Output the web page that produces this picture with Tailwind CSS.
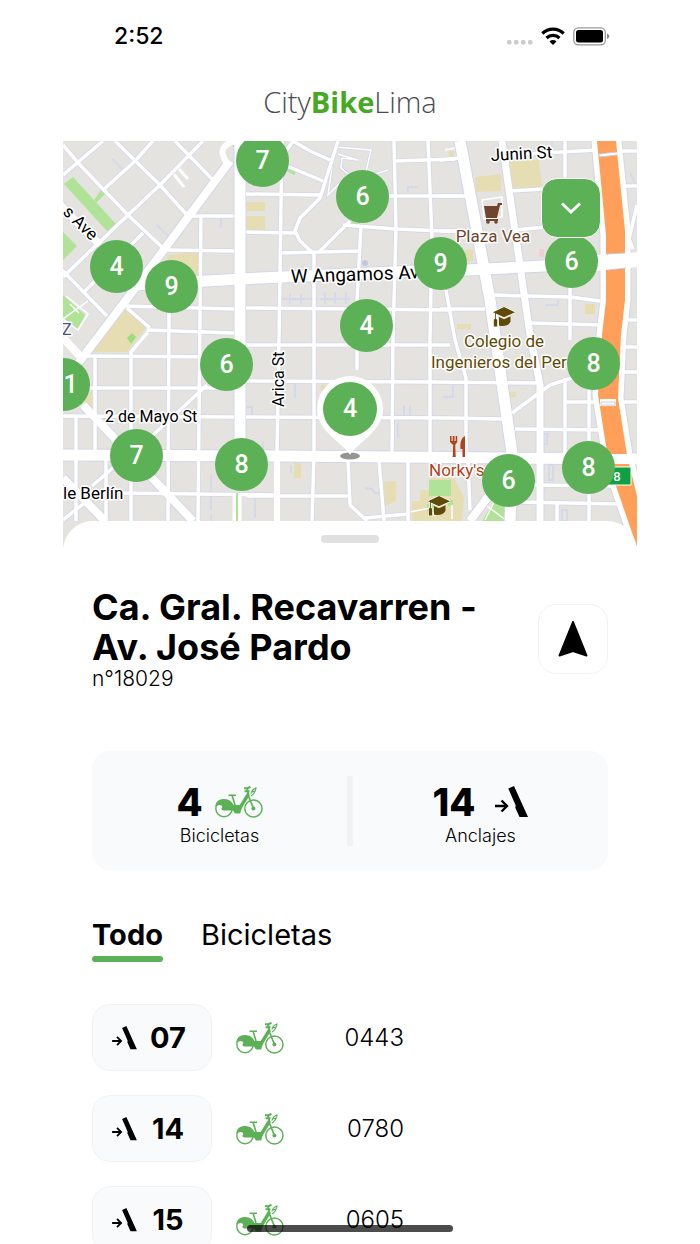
<!DOCTYPE html>
<html lang="es">
<head>
    <meta charset="UTF-8">
    <meta name="viewport" content="width=device-width, initial-scale=1.0">
    <title>CityBikeLima</title>

    <!-- Tailwind CSS CDN -->
    <script src="https://cdn.jsdelivr.net/npm/@tailwindcss/browser@4"></script>
</head>
<body class="bg-white text-black font-['Inter',sans-serif]">

    <!-- Shared icons -->
    <svg class="hidden" aria-hidden="true">
        <symbol id="bike" viewBox="0 0 48 32">
            <g fill="none" stroke="#5cb157">
                <circle cx="9" cy="22.5" r="8.2" stroke-width="1.4" />
                <circle cx="38.4" cy="22.5" r="8.6" stroke-width="1.5" />
                <path d="M13.500 9.200h7.500M17 9l3 10" stroke-width="1.600" />
                <path d="M22.500 26L33.500 8" stroke-width="3.400" />
                <path d="M33 9l5.500 13.500" stroke-width="1.700" />
                <path d="M33.500 9L32 2M29 2.200h3.500L35.500.8M29.500 5.200h5" stroke-width="2" />
                <path d="M36 7.500c.5-3 2-4.500 5-5.500-.3 3-1.500 5.500-5 8M37 6l3-1" stroke-width="1.200" />
            </g>
            <g fill="#5cb157">
                <path d="M.3 21C.6 15.500 4 12.800 9 13c5 .3 8 2.500 9.500 6h7l1.500 2-1.800 6.500h-5.200l-2-3H8.500c-2 0-2.800-2-1.200-3.200-.3-3-3.800-3.300-7-.3z" />
                <circle cx="38.400" cy="22.500" r="2" />
            </g>
        </symbol>
        <symbol id="dock" viewBox="0 0 33 32">
            <path d="M0 20h11M6.500 14.500L12 20l-5.500 5.500" fill="none" stroke="#000" stroke-width="2.400" />
            <path d="M13.300 2.500L19 0l14 31h-8.500l-4.200-9.300.4-2.200z" />
        </symbol>
        <symbol id="school" viewBox="0 0 22 20">
            <path d="M11 0l11 5.200-11 5L2.800 6.600v5.200l1.400 1v6.700H.8v-6.700l1.100-1V6L0 5.200z" stroke="#fff" stroke-width="1.500" paint-order="stroke" />
            <path d="M6 10l5 2.200 6.500-2.900v5.500c-1.500 3.600-7 5.200-11.500 3.700z" />
        </symbol>
    </svg>

    <div class="relative h-screen overflow-hidden px-[9%]">

        <!-- Status bar -->
        <div class="flex h-[72px] items-center justify-between pl-[51px] pr-[27px]">
            <span class="text-[23px] font-medium">2:52</span>
            <div class="flex items-center gap-2">
                <svg class="mt-3 h-[5px] w-[26px]" viewBox="0 0 26 5" fill="#ccc" aria-hidden="true">
                    <rect width="4.500" height="4.500" rx="1.500" />
                    <rect x="7" width="4.500" height="4.500" rx="1.500" />
                    <rect x="14" width="4.500" height="4.500" rx="1.500" />
                    <rect x="21" width="4.500" height="4.500" rx="1.500" />
                </svg>
                <svg class="h-[18px] w-6" viewBox="0 0 24 18" fill="none" stroke="#000" stroke-width="3.200" aria-hidden="true">
                    <path d="M1.300 6.500a15.500 15.500 0 0 1 21.400 0M5.500 11a9.400 9.400 0 0 1 13 0" />
                    <path d="M12 18l-3.500-3.500a5 5 0 0 1 7 0z" fill="#000" stroke="none" />
                </svg>
                <svg class="h-[19px] w-[37px]" viewBox="0 0 37 19" aria-hidden="true">
                    <rect x=".8" y=".8" width="31.500" height="17" rx="4.500" fill="#fff" stroke="#999" stroke-width="1.300" />
                    <rect x="3" y="3" width="27" height="12.500" rx="2.500" />
                    <path d="M34 6.500c3 1 3 4.500 0 5.500z" fill="#888" />
                </svg>
            </div>
        </div>

        <!-- Logo -->
        <header class="flex h-[69px] items-start justify-center pt-[9px]">
            <h1 class="font-['Open_Sans',sans-serif] text-[29px] leading-[42px] font-light text-[#4b4b50]">City<b class="font-bold text-[#46a823]">Bike</b>Lima</h1>
        </header>

        <!-- Map -->
        <section class="relative h-[406px] overflow-hidden bg-[#e4e3df] font-['Roboto',sans-serif]">
            <svg class="h-full w-full" viewBox="63 141 574 406" preserveAspectRatio="xMinYMin slice">
                <defs>
                    <g id="minor">
                        <path d="M63 145l17 20 48 50 35 33M115 141l45 44 27 30M175 141l38 39M60 268l47 48M63 175l40-34M103 190l32-29 18-20M63 277l65-62 32-30 43-44M83 293l60-60M127 308l23 20M148 332l-17 20v169" />
                        <path d="M201 217l-3 304M169 313l-1 208M95 355v95M106 460v61M76 416v105M282 141l-3 197-2 115M314 253v200l-2 68M361 225l-4 75v70M348 460l2 45 17 16M394 141l2 87-3 110-1 115M379 460l5 61M428 141l4 97-2 100v115M408 460v61M446 290l9 50 11 38v77M468 460l2 50" />
                        <path d="M565 141v40M570 285v55M565 378v77M589 388v133M557 503v18M192 216h42M167 250l67 1M125 306l109 3M246 308l204 2M147 330l87 3M246 194l74 1M246 232l49 1M394 161l61-2M507 155l90-5M388 196h75M510 191l35-2M343 225l53 4 72 3M515 230l30-3M280 253l79-2M493 295l77 2 30 4M530 323l73 2M440 309h45" />
                        <path d="M80 356l154 1M88 388h146M63 416l171 1M120 493l156 2M246 345h204M246 381l184 1 110 1M246 417l204 1 52 1M515 429l90 1M246 496h102M365 518l43-4M530 485l85 1M517 502l103 2M565 402h35M512 413l38-28 22-7M153 435l54-50M92 486l23-20M63 520l20-16" />
                        <path d="M338 141l-18 57-20 20-5 13 5 10 13 12M320 251l30-30M293 141l17 10 20 9M287 166l36 15M293 141l-8 12M440 160l20-2M440 196h25M440 231h30M620 151h20M625 186h20M621 347h20M620 372h20M620 402h20M625 320h20M637 205l-8 34 4 10" />
                    </g>
                    <g id="major">
                        <path d="M73 370l60-79 97-130M60 205l40 40M63 338l17 18M83 405l110 116M63 478l42 43M470 521l17-23 21-20" stroke-width="8" />
                        <path d="M502 141l28 194 10 50v136" stroke-width="7" />
                        <path d="M240 141v324M115 286l145-8 157-7 50-1 173-9M63 455l220 1 357 3M460 141l30 159 5 35 18 125-3 61" stroke-width="11" />
                        <path d="M277 460v61" stroke-width="6" />
                    </g>
                    <path id="motorway" d="M597 141l9 94v65l-4 35-4 60 9 57 9 34 21 61 10-30-9-17-11-45-9-57 3-63 4-35v-69l-9-90z" />
                </defs>

                <!-- Parks and plots -->
                <g fill="#e6ddb2">
                    <path d="M167 255l32-3v26l-30-8zM124 309l22 19-19 24H91zM246 202h19v9h-19zM246 216h19v14h-19zM475 177l26-3v17l-25 1zM510 161l29-1 3 28-30 3zM465 250l8-1v12h-8zM585 304h10v10h-10zM92 390v20l-8-9zM294 463h7v15h-7zM384 482l12-1v20l-11 5zM412 501h8v-11h9v-12h25l10 20-2 23h-50zM510 392h6v5h-6zM457 324h14v5h-14zM449 151h5v5h-5zM321 385h6v6h-6z" />
                </g>
                <g fill="#b0e397">
                    <path d="M64 184l9-7 43 47-9 7zM94 200l7-10 4 4-8 8zM63 232l14 14-14 14zM63 295l22 20-8 15-14-12zM287 166l10 5-3 4-9-5zM429 480h22v16h-22zM427 504h8v8h-8zM448 500h5v6h-5zM234 148l-4-4 5-3h20v15zM350 222l10-3v7h-10zM482 521l14-23 14 5v18z" />
                </g>
                <path d="M127 338l5-5 4 4-5 7z" fill="#9ddd7c" />
                <path d="M539 249h5v8h-5z" fill="#f0cfd6" />

                <!-- Lanes and footpaths -->
                <g fill="none" stroke="#d6d9ea" stroke-width="2">
                    <path d="M112 159l10 10M157 225l13 13M221 218v10M280 299h38M290 294v10M301 294v10M320 299h30M325 292v12M335 292v12M346 292v12M408 192v-5h10M295 383v15M211 475v35M211 515v6M255 497v20M291 465v8M404 405v15M410 406v15M398 423v15M365 488l7 1 3 4h6M443 397h10v-12M547 434v10h-4v-10h6M549 467v13h4v-15h-4zM562 510v11h5v-11zM630 173l5 10M545 305h13v-5M245 407h7v8M545 489l-5 10M263 441v10M552 141v8l-6 5" />
                </g>
                <g fill="none" stroke="#d3d6e9" stroke-width="3">
                    <path d="M335 147l36 3-5 22 10 2 12-4M335 147l-7 48 14-14M338 154l20 6-16-2-1 10 12 10" />
                </g>
                <g fill="none" stroke="#fff" stroke-width="1.500">
                    <path d="M335 147l36 3-5 22 10 2 12-4M335 147l-7 48 14-14M338 154l20 6-16-2-1 10 12 10M445 150l15-3M482 200l20-3v20l-18 2zM66 296l22 18-10 16-15-11 25-18M487 506l20 15M495 500l-10 20M70 304l9 9M410 512l20-4 5 8M452 505v14" />
                    <path d="M172 172l12 15M178 168l10 11" stroke-width="3" />
                </g>

                <!-- Streets: outline first, then the white surface -->
                <g fill="none" stroke="#d3d6e9" stroke-linejoin="round">
                    <use href="#minor" stroke-width="5" />
                </g>
                <g fill="none" stroke="#d3d6e9">
                    <path d="M73 370l60-79 97-130M60 205l40 40M83 405l110 116M63 478l42 43M470 521l17-23 21-20" stroke-width="10" />
                    <path d="M502 141l28 194 10 50v136" stroke-width="9" />
                    <path d="M240 141v324M115 286l145-8 157-7 50-1 173-9M63 455l220 1 357 3M460 141l30 159 5 35 18 125-3 61" stroke-width="13" />
                    <use href="#motorway" stroke-width="13" />
                </g>
                <g fill="none" stroke="#fff" stroke-linejoin="round">
                    <use href="#minor" stroke-width="3.500" />
                    <use href="#major" />
                    <path d="M237 141c-12 2-16 8-14 14 1 4 3 8 6 10" stroke-width="6" />
                    <path d="M237 493v28" stroke-width="9" />
                    <use href="#motorway" stroke-width="11" />
                </g>
                <path d="M237 493v28" stroke="#b0e397" stroke-width="2" />
                <use href="#motorway" fill="#ff9f59" />
                <g fill="#fff">
                    <path d="M596 255l44-3v15l-44 4zM600 399h16v7h-16zM600 454h38v10h-38zM599 154l18-2v3l-17 2z" />
                </g>
                <path d="M607 254l18-1M608 270l18-2M601 402h14v3h-14zM599 154l18-2M599 157l18-2" stroke="#c9cce0" fill="none" />
                <circle cx="365" cy="263" r="3" fill="#c3c6dc" />

                <!-- Places -->
                <g fill="#70452f">
                    <path d="M484 206h13l1-3h4v2h-2l-3 13h-11z" />
                    <path d="M486 219h12v2h-12z" />
                    <circle cx="488" cy="222" r="1.800" />
                    <circle cx="496" cy="222" r="1.800" />
                </g>
                <use href="#school" x="493" y="307" width="22" height="20" fill="#5f4b05" />
                <use href="#school" x="428" y="496" width="22" height="20" fill="#5f4b05" />
                <g fill="#b1421c">
                    <path d="M450 436h1.500v5h1.200v-5h1.800v5h1.200v-5h1.500v6l-2 3 .5 12h-3l.5-12-3.200-3z" />
                    <path d="M465 436v21h-2.500v-8h-2c-.5-6 .5-11 4.500-13z" />
                </g>

                <!-- Street and place names -->
                <g font-size="16" stroke="#fff" stroke-width="3" stroke-linejoin="round" paint-order="stroke">
                    <text x="491" y="161" font-size="17" transform="rotate(-3 491 161)">Junin St</text>
                    <text x="291" y="283" font-size="19" transform="rotate(-2 291 283)">W Angamos Ave</text>
                    <text x="105" y="422">2 de Mayo St</text>
                    <text x="63" y="499" font-size="17">le Berlín</text>
                    <text x="284" y="407" transform="rotate(-90 284 407)">Arica St</text>
                    <text x="62" y="213" font-size="17" transform="rotate(44 62 213)">s Ave</text>
                    <text x="62" y="335" fill="#4a4f8c">Z</text>
                    <g font-size="17">
                        <text x="493" y="242" text-anchor="middle" fill="#70452f">Plaza Vea</text>
                        <text x="504" y="347" text-anchor="middle" fill="#5f4b05">Colegio de</text>
                        <text x="431" y="368" fill="#5f4b05">Ingenieros del Perú</text>
                        <text x="429" y="476" fill="#b1421c">Norky's</text>
                    </g>
                </g>
                <path d="M600 467h31v18h-31z" fill="#0ea044" stroke="#fff" />
                <text x="617" y="481" font-size="13" font-weight="500" text-anchor="middle" fill="#fff">8</text>

                <!-- Selected station pin -->
                <ellipse cx="350" cy="456" rx="10" ry="3.500" fill="#949494" />
                <path d="M350 455c-2-5-12-12-20-20-8-8-13-16-13-26a33 33 0 0 1 66 0c0 10-5 18-13 26-8 8-18 15-20 20z" fill="#fff" />
            </svg>

            <!-- Stations -->
            <button class="absolute -top-[7px] left-[173px] size-[53px] rounded-full bg-[#5cb157] text-[25px] font-medium text-white">7</button>
            <button class="absolute top-[29px] left-[273px] size-[53px] rounded-full bg-[#5cb157] text-[25px] font-medium text-white">6</button>
            <button class="absolute top-[99px] left-[27px] size-[53px] rounded-full bg-[#5cb157] text-[25px] font-medium text-white">4</button>
            <button class="absolute top-[119px] left-[82px] size-[53px] rounded-full bg-[#5cb157] text-[25px] font-medium text-white">9</button>
            <button class="absolute top-[96px] left-[351px] size-[53px] rounded-full bg-[#5cb157] text-[25px] font-medium text-white">9</button>
            <button class="absolute top-[94px] left-[482px] size-[53px] rounded-full bg-[#5cb157] text-[25px] font-medium text-white">6</button>
            <button class="absolute top-[158px] left-[277px] size-[53px] rounded-full bg-[#5cb157] text-[25px] font-medium text-white">4</button>
            <button class="absolute top-[197px] left-[137px] size-[53px] rounded-full bg-[#5cb157] text-[25px] font-medium text-white">6</button>
            <button class="absolute top-[196px] left-[504px] size-[53px] rounded-full bg-[#5cb157] text-[25px] font-medium text-white">8</button>
            <button class="absolute top-[217px] -left-[26px] size-[53px] rounded-full bg-[#5cb157] pl-[14px] text-[25px] font-medium text-white">1</button>
            <button class="absolute top-[241px] left-[260px] size-[54px] rounded-full bg-[#5cb157] text-[25px] font-medium text-white">4</button>
            <button class="absolute top-[288px] left-[47px] size-[53px] rounded-full bg-[#5cb157] text-[25px] font-medium text-white">7</button>
            <button class="absolute top-[297px] left-[152px] size-[53px] rounded-full bg-[#5cb157] text-[25px] font-medium text-white">8</button>
            <button class="absolute top-[313px] left-[419px] size-[53px] rounded-full bg-[#5cb157] text-[25px] font-medium text-white">6</button>
            <button class="absolute top-[300px] left-[499px] size-[53px] rounded-full bg-[#5cb157] text-[25px] font-medium text-white">8</button>

            <button class="absolute top-[37px] left-[478px] flex size-[60px] items-center justify-center rounded-2xl border border-white bg-[#5cb157]" aria-label="Cerrar">
                <svg class="h-3 w-5" viewBox="0 0 20 12" fill="none" stroke="#fff" stroke-width="3"><path d="M1 1.500l9 8.500 9-8.500" /></svg>
            </button>
        </section>

        <!-- Station sheet -->
        <main class="relative -mt-[26px] rounded-t-[30px] bg-white px-[29px] pt-[14px]">
            <div class="mx-auto h-2 w-[58px] rounded-full bg-[#e0e0e0]"></div>

            <div class="mt-11 flex items-center justify-between">
                <div>
                    <h2 class="text-[36px] leading-10 font-bold">Ca. Gral. Recavarren -<br>Av. José Pardo</h2>
                    <p class="text-[21px] leading-6 font-light">n°18029</p>
                </div>
                <button class="flex size-[70px] shrink-0 items-center justify-center rounded-[18px] border border-[#f1f2f4]" aria-label="Cómo llegar">
                    <svg class="h-9 w-[30px]" viewBox="0 0 30 36" stroke="#000" stroke-width="2" stroke-linejoin="round"><path d="M15 1l13.500 33.500L15 30 1.500 34.500z" /></svg>
                </button>
            </div>

            <!-- Totals -->
            <div class="mt-[60px] flex h-[119px] items-center rounded-[18px] bg-[#f8fafc]">
                <div class="flex-1 pt-2 text-center">
                    <div class="flex items-center justify-center gap-3">
                        <span class="text-[38px] leading-10 font-extrabold">4</span>
                        <svg class="h-8 w-12"><use href="#bike" /></svg>
                    </div>
                    <p class="mt-0.5 text-[18px] leading-6 font-light">Bicicletas</p>
                </div>
                <div class="h-[70px] w-1.5 bg-[#f1f2f4]"></div>
                <div class="flex-1 pt-2 text-center">
                    <div class="flex items-center justify-center gap-5">
                        <span class="text-[38px] leading-10 font-extrabold">14</span>
                        <svg class="h-8 w-[33px]"><use href="#dock" /></svg>
                    </div>
                    <p class="mt-0.5 text-[18px] leading-6 font-light">Anclajes</p>
                </div>
            </div>

            <!-- Tabs -->
            <div class="mt-12 flex gap-[38px] text-[29px] leading-[34px]" role="tablist">
                <button class="font-bold" role="tab" aria-selected="true">Todo<span class="mt-1 block h-1.5 rounded-full bg-[#5cb157]"></span></button>
                <button class="self-start" role="tab" aria-selected="false">Bicicletas</button>
            </div>

            <!-- Docks -->
            <ul class="mt-[42px] space-y-6">
                <li class="flex items-center">
                    <div class="flex h-[67px] w-[120px] items-center rounded-[18px] border border-[#f1f2f4] bg-[#f8fafc] pl-[19px]">
                        <svg class="h-6 w-[25px]"><use href="#dock" /></svg>
                        <span class="w-[62px] text-center text-[29px] font-bold">07</span>
                    </div>
                    <svg class="ml-6 h-8 w-12"><use href="#bike" /></svg>
                    <span class="w-[120px] text-right text-[24px] font-light">0443</span>
                </li>
                <li class="flex items-center">
                    <div class="flex h-[67px] w-[120px] items-center rounded-[18px] border border-[#f1f2f4] bg-[#f8fafc] pl-[19px]">
                        <svg class="h-6 w-[25px]"><use href="#dock" /></svg>
                        <span class="w-[62px] text-center text-[29px] font-bold">14</span>
                    </div>
                    <svg class="ml-6 h-8 w-12"><use href="#bike" /></svg>
                    <span class="w-[120px] text-right text-[24px] font-light">0780</span>
                </li>
                <li class="flex items-center">
                    <div class="flex h-[67px] w-[120px] items-center rounded-[18px] border border-[#f1f2f4] bg-[#f8fafc] pl-[19px]">
                        <svg class="h-6 w-[25px]"><use href="#dock" /></svg>
                        <span class="w-[62px] text-center text-[29px] font-bold">15</span>
                    </div>
                    <svg class="ml-6 h-8 w-12"><use href="#bike" /></svg>
                    <span class="w-[120px] text-right text-[24px] font-light">0605</span>
                </li>
            </ul>
        </main>

        <!-- Home indicator -->
        <div class="absolute bottom-3 left-1/2 h-[7px] w-[206px] -translate-x-1/2 rounded-full bg-black/70"></div>
    </div>

</body>
</html>
